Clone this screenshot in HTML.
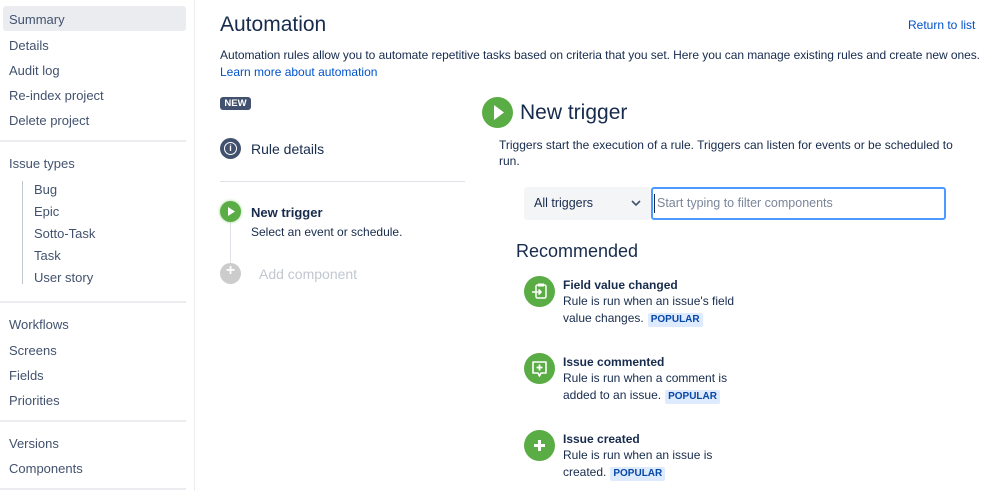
<!DOCTYPE html>
<html><head><meta charset="utf-8"><style>
*{margin:0;padding:0;box-sizing:border-box}
body{width:999px;height:491px;overflow:hidden;background:#fff;font-family:"Liberation Sans",Arial,sans-serif;color:#172b4d;position:relative}
.a{position:absolute;white-space:nowrap}
.sb{font-size:13px;color:#42526e}
.hr{position:absolute;left:0;width:186px;height:2px;background:#ebecf0}
.pop{display:inline-block;background:#deebff;color:#0747a6;font-size:10px;line-height:12px;font-weight:bold;padding:1px 3px;border-radius:2px;margin-left:4px;vertical-align:0}
.ic{position:absolute;width:31px;height:31px;border-radius:50%;background:#5aac44}
.t{font-size:12px;line-height:16.5px;color:#172b4d}
</style></head><body>
<div class="a" style="left:3px;top:6px;width:183px;height:25px;background:#ebecf0;border-radius:3px"></div>
<div class="a" style="left:194px;top:0;width:1px;height:491px;background:#ebecf0"></div>
<div class="a sb" style="left:9px;top:12px">Summary</div>
<div class="a sb" style="left:9px;top:38px">Details</div>
<div class="a sb" style="left:9px;top:63px">Audit log</div>
<div class="a sb" style="left:9px;top:88px">Re-index project</div>
<div class="a sb" style="left:9px;top:113px">Delete project</div>
<div class="hr" style="top:140px"></div>
<div class="a sb" style="left:9px;top:156px">Issue types</div>
<div class="a" style="left:22px;top:181px;width:1px;height:103px;background:#c1c7d0"></div>
<div class="a sb" style="left:34px;top:182px">Bug</div>
<div class="a sb" style="left:34px;top:204px">Epic</div>
<div class="a sb" style="left:34px;top:226px">Sotto-Task</div>
<div class="a sb" style="left:34px;top:248px">Task</div>
<div class="a sb" style="left:34px;top:270px">User story</div>
<div class="hr" style="top:301px"></div>
<div class="a sb" style="left:9px;top:317px">Workflows</div>
<div class="a sb" style="left:9px;top:343px">Screens</div>
<div class="a sb" style="left:9px;top:368px">Fields</div>
<div class="a sb" style="left:9px;top:393px">Priorities</div>
<div class="hr" style="top:420px"></div>
<div class="a sb" style="left:9px;top:436px">Versions</div>
<div class="a sb" style="left:9px;top:461px">Components</div>
<div class="hr" style="top:488px"></div>

<div class="a" style="left:220px;top:13px;font-size:21px">Automation</div>
<div class="a" style="left:908px;top:18px;font-size:12px;color:#0052cc">Return to list</div>
<div class="a" style="left:220px;top:48px;font-size:12px;letter-spacing:-0.05px">Automation rules allow you to automate repetitive tasks based on criteria that you set. Here you can manage existing rules and create new ones.</div>
<div class="a" style="left:220px;top:65px;font-size:12px;color:#0052cc">Learn more about automation</div>
<div class="a" style="left:220px;top:97px;width:31px;height:13px;background:#42526e;border-radius:3px;color:#fff;font-size:9.5px;font-weight:bold;text-align:center;line-height:13px">NEW</div>
<div class="a" style="left:220px;top:138px;width:21px;height:21px;border-radius:50%;background:#42526e"></div>
<div class="a" style="left:224px;top:142px;width:13px;height:13px;border-radius:50%;border:1.5px solid #fff;color:#fff;font-size:9px;font-weight:bold;text-align:center;line-height:10px">i</div>
<div class="a" style="left:251px;top:141px;font-size:14px;color:#172b4d">Rule details</div>
<div class="a" style="left:220px;top:181px;width:245px;height:1px;background:#dfe1e6"></div>
<div class="a" style="left:230px;top:221px;width:1px;height:42px;background:#dfe1e6"></div>
<div class="a" style="left:220px;top:201px;width:21px;height:21px;border-radius:50%;background:#5aac44;box-shadow:0 0 3px #9fd18f"></div>
<svg class="a" style="left:220px;top:201px" width="21" height="21"><path d="M8 6 L15 10.5 L8 15Z" fill="#fff"/></svg>
<div class="a" style="left:251px;top:205px;font-size:13px;font-weight:bold">New trigger</div>
<div class="a" style="left:251px;top:225px;font-size:12px">Select an event or schedule.</div>
<div class="a" style="left:220px;top:263px;width:21px;height:21px;border-radius:50%;background:#ccc"></div>
<div class="a" style="left:224px;top:262px;width:13px;color:#fff;font-size:16px;font-weight:bold;text-align:center">+</div>
<div class="a" style="left:259px;top:266px;font-size:14px;color:#c1c7d0">Add component</div>

<div class="a" style="left:482px;top:97px;width:31px;height:31px;border-radius:50%;background:#5aac44"></div>
<svg class="a" style="left:482px;top:97px" width="31" height="31"><path d="M12 8 L22 15.5 L12 23Z" fill="#fff"/></svg>
<div class="a" style="left:520px;top:101px;font-size:21px">New trigger</div>
<div class="a" style="left:499px;top:138px;font-size:12px">Triggers start the execution of a rule. Triggers can listen for events or be scheduled to</div>
<div class="a" style="left:499px;top:154px;font-size:12px">run.</div>
<div class="a" style="left:524px;top:187px;width:127px;height:33px;background:#f4f5f7;border-radius:3px"></div>
<div class="a" style="left:534px;top:196px;font-size:12.5px">All triggers</div>
<svg class="a" style="left:630px;top:198px" width="12" height="10"><path d="M2 3 L6 7 L10 3" stroke="#42526e" stroke-width="1.6" fill="none"/></svg>
<div class="a" style="left:651px;top:187px;width:295px;height:33px;border:2px solid #4c9aff;border-radius:3px;background:#fff"></div>
<div class="a" style="left:654px;top:194px;width:1px;height:19px;background:#172b4d"></div>
<div class="a" style="left:657px;top:196px;font-size:12.5px;color:#7a869a">Start typing to filter components</div>
<div class="a" style="left:516px;top:241px;font-size:18px">Recommended</div>

<div class="ic" style="left:524px;top:276px"></div>
<svg class="a" style="left:524px;top:276px" width="31" height="31"><rect x="12" y="9" width="10" height="13" rx="1.5" stroke="#fff" stroke-width="1.5" fill="none"/><rect x="14" y="7.5" width="6" height="3" fill="#fff"/><path d="M8 16 H17 M14.5 13.5 L17 16 L14.5 18.5" stroke="#fff" stroke-width="1.6" fill="none"/></svg>
<div class="a t" style="left:563px;top:277px;font-weight:bold">Field value changed</div>
<div class="a t" style="left:563px;top:293px">Rule is run when an issue's field</div>
<div class="a t" style="left:563px;top:310px">value changes.<span class="pop">POPULAR</span></div>

<div class="ic" style="left:524px;top:353px"></div>
<svg class="a" style="left:524px;top:353px" width="31" height="31"><path d="M9 9 H22 V20 H17 L15.5 23 L14 20 H9Z" stroke="#fff" stroke-width="1.6" fill="none" stroke-linejoin="round"/><path d="M15.5 11.5 V17.5 M12.5 14.5 H18.5" stroke="#fff" stroke-width="1.8"/></svg>
<div class="a t" style="left:563px;top:354px;font-weight:bold">Issue commented</div>
<div class="a t" style="left:563px;top:370px">Rule is run when a comment is</div>
<div class="a t" style="left:563px;top:387px">added to an issue.<span class="pop">POPULAR</span></div>

<div class="ic" style="left:524px;top:430px"></div>
<svg class="a" style="left:524px;top:430px" width="31" height="31"><path d="M15.5 10 V21 M10 15.5 H21" stroke="#fff" stroke-width="3"/></svg>
<div class="a t" style="left:563px;top:431px;font-weight:bold">Issue created</div>
<div class="a t" style="left:563px;top:447px">Rule is run when an issue is</div>
<div class="a t" style="left:563px;top:464px">created.<span class="pop">POPULAR</span></div>
</body></html>
